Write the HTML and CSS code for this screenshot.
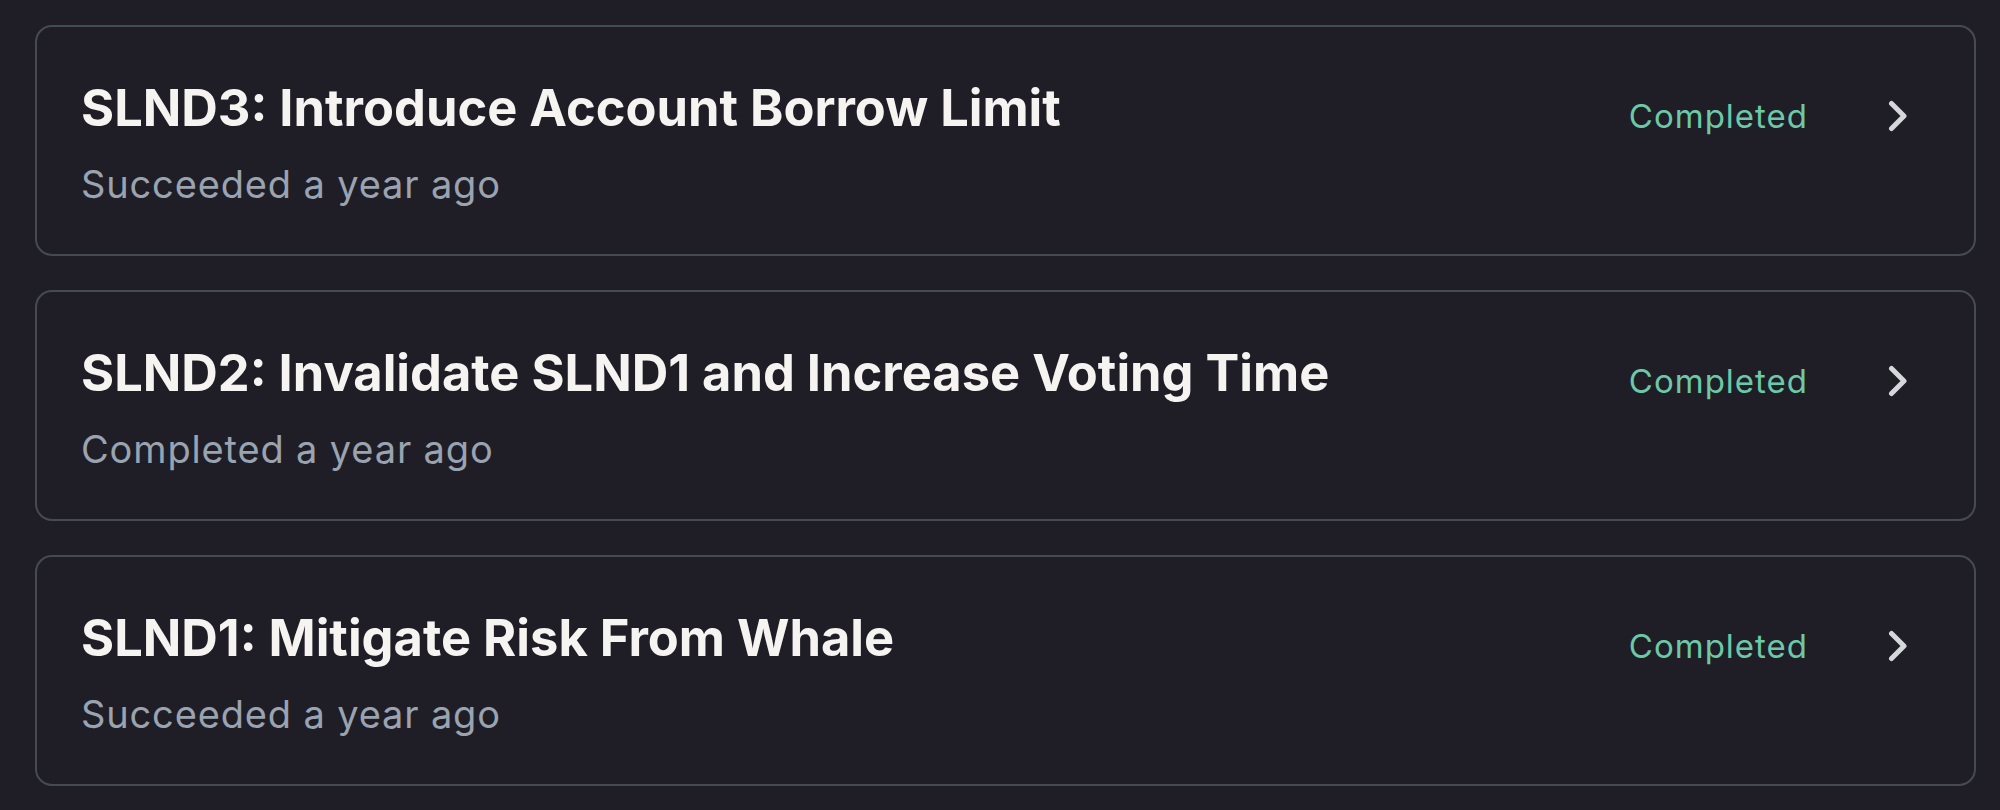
FILE: index.html
```html
<!DOCTYPE html>
<html>
<head>
<meta charset="utf-8">
<link rel="stylesheet" href="styles.css">
</head>
<body>
<div class="list">
  <div class="card">
    <div class="info">
      <div class="title">SLND3: Introduce Account Borrow Limit</div>
      <div class="sub">Succeeded a year ago</div>
    </div>
    <div class="side">
      <span class="status">Completed</span>
      <svg class="chev" viewBox="0 0 20 32" width="20" height="32"><path d="M3.5 3.5 L16 16 L3.5 28.5" fill="none" stroke="#d6d7db" stroke-width="5" stroke-linecap="round" stroke-linejoin="round"/></svg>
    </div>
  </div>
  <div class="card">
    <div class="info">
      <div class="title">SLND2: Invalidate SLND1 and Increase Voting Time</div>
      <div class="sub">Completed a year ago</div>
    </div>
    <div class="side">
      <span class="status">Completed</span>
      <svg class="chev" viewBox="0 0 20 32" width="20" height="32"><path d="M3.5 3.5 L16 16 L3.5 28.5" fill="none" stroke="#d6d7db" stroke-width="5" stroke-linecap="round" stroke-linejoin="round"/></svg>
    </div>
  </div>
  <div class="card">
    <div class="info">
      <div class="title">SLND1: Mitigate Risk From Whale</div>
      <div class="sub">Succeeded a year ago</div>
    </div>
    <div class="side">
      <span class="status">Completed</span>
      <svg class="chev" viewBox="0 0 20 32" width="20" height="32"><path d="M3.5 3.5 L16 16 L3.5 28.5" fill="none" stroke="#d6d7db" stroke-width="5" stroke-linecap="round" stroke-linejoin="round"/></svg>
    </div>
  </div>
</div>
</body>
</html>
```
FILE: styles.css
```css
html, body {
  margin: 0;
  padding: 0;
  background: #1f1e27;
  font-family: Inter, "Noto Sans", sans-serif;
}
.list {
  display: flex;
  flex-direction: column;
  gap: 34px;
  padding: 25px 24px 0 35px;
}
.card {
  box-sizing: border-box;
  height: 231px;
  border: 2px solid #464b53;
  border-radius: 17px;
  display: flex;
  justify-content: space-between;
  align-items: flex-start;
  padding: 51px 66px 0 44px;
}
.info {
  display: flex;
  flex-direction: column;
  gap: 24px;
}
.title {
  color: #f5f4f0;
  font-size: 50.6px;
  font-weight: 700;
  line-height: 60px;
}
.sub {
  color: #9aa3b0;
  font-size: 38px;
  line-height: 44px;
  letter-spacing: 0.85px;
}
.side {
  display: flex;
  align-items: center;
  gap: 80px;
  height: 70px;
  padding-top: 3px;
}
.status {
  color: #6cc9a8;
  font-size: 33px;
  letter-spacing: 1px;
}
.chev {
  display: block;
}
```
